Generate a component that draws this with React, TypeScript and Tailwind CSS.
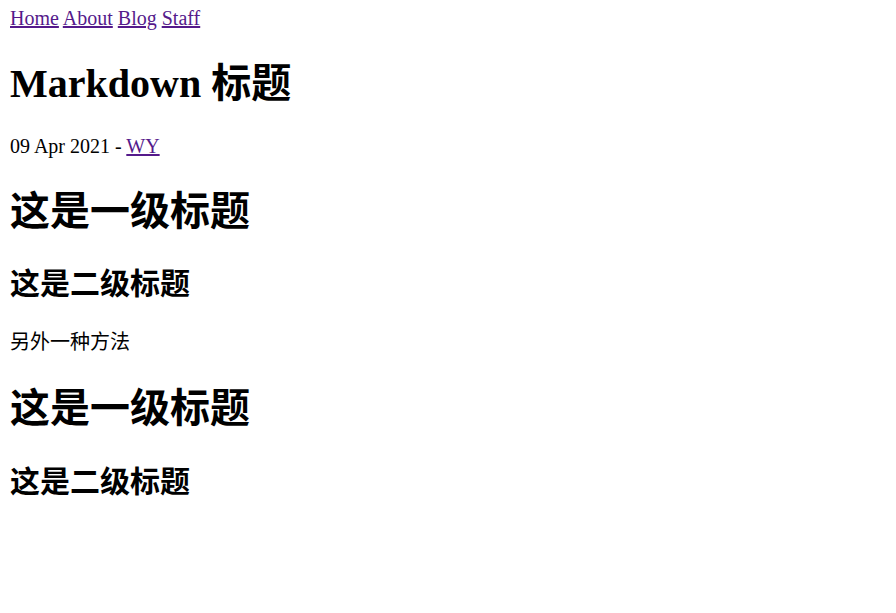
export default function App() {
  const font = "font-['Liberation_Serif','Noto_Sans_CJK_SC',serif]";
  return (
    <div className={`${font} mx-[10px] mt-[7px] mb-[10px] text-[20px] leading-[23px] text-black bg-white`}>
      <div>
        <a href="#" className="text-[#551a8b] underline">Home</a>{" "}
        <a href="#" className="text-[#551a8b] underline">About</a>{" "}
        <a href="#" className="text-[#551a8b] underline">Blog</a>{" "}
        <a href="#" className="text-[#551a8b] underline">Staff</a>
      </div>
      <h1 className="text-[40px] font-bold leading-[53px] mt-[26.8px] mb-[25px]">Markdown 标题</h1>
      <p className="my-[20px]">
        09 Apr 2021 - <a href="#" className="text-[#551a8b] underline">WY</a>
      </p>
      <h1 className="text-[40px] font-bold leading-[53px] my-[26.8px]">这是一级标题</h1>
      <h2 className="text-[30px] font-bold leading-[40px] my-[24.9px]">这是二级标题</h2>
      <p className="my-[20px] leading-[26px]">另外一种方法</p>
      <h1 className="text-[40px] font-bold leading-[53px] my-[26.8px]">这是一级标题</h1>
      <h2 className="text-[30px] font-bold leading-[40px] my-[24.9px]">这是二级标题</h2>
    </div>
  );
}
